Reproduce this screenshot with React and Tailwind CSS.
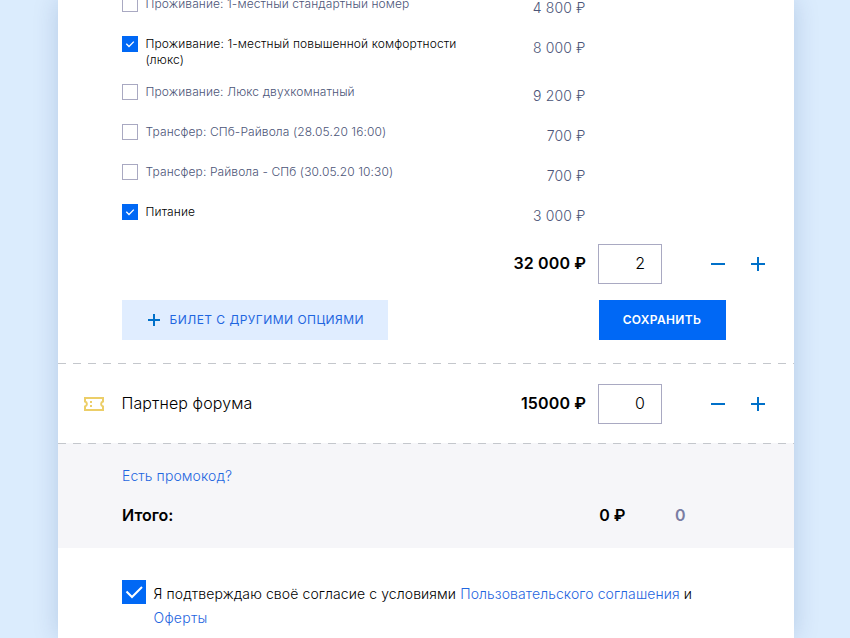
import React from 'react';

const options = [
  { title: 'Проживание: 1-местный стандартный номер', price: '4 800 ₽', checked: false },
  { title: 'Проживание: 1-местный повышенной комфортности (люкс)', price: '8 000 ₽', checked: true },
  { title: 'Проживание: Люкс двухкомнатный', price: '9 200 ₽', checked: false },
  { title: 'Трансфер: СПб-Райвола (28.05.20 16:00)', price: '700 ₽', checked: false },
  { title: 'Трансфер: Райвола - СПб (30.05.20 10:30)', price: '700 ₽', checked: false },
  { title: 'Питание', price: '3 000 ₽', checked: true },
];

const Plus = ({ size = 24, d = 'M12 5v14M5 12h14' }) => (
  <svg width={size} height={size} viewBox={`0 0 ${size} ${size}`} fill="none" stroke="#0070c9" strokeWidth="2">
    <path d={d} />
  </svg>
);

const SmallCheckbox = ({ checked }) =>
  checked ? (
    <span className="flex h-4 w-4 shrink-0 bg-[#0068f5]">
      <svg width="16" height="16" viewBox="0 0 16 16" fill="none" stroke="#fff" strokeWidth="1.3">
        <path d="M4.3 7.7l2.7 2.8 4.8-4.9" />
      </svg>
    </span>
  ) : (
    <span className="h-4 w-4 shrink-0 border border-[#a9a9c2] bg-white" />
  );

const OptionRow = ({ option }) => (
  <label className="mb-4 flex w-[463.5px] items-start">
    <SmallCheckbox checked={option.checked} />
    <span
      className={`ml-[7.5px] w-[336px] text-[12px] leading-4 ${
        option.checked ? 'tracking-[0.13px] text-black' : 'tracking-[0.1px] text-[#4c5578]'
      }`}
    >
      {option.title}
    </span>
    <span className="ml-auto text-[14px] leading-6 tracking-[0.12px] text-[#4c5578]">{option.price}</span>
  </label>
);

const Counter = ({ price, value }) => (
  <>
    <span className="ml-auto w-[120px] pb-0.5 text-right text-[16px] leading-6 font-semibold tracking-[0.12px]">
      {price}
    </span>
    <input
      className="ml-3 h-10 w-16 border border-[#a9a9c2] bg-white pr-4 pb-0.5 text-right text-[16px] font-light text-black"
      defaultValue={value}
    />
    <button className="ml-11">
      <Plus d="M5 12h14" />
    </button>
    <button className="ml-4 mr-6">
      <Plus />
    </button>
  </>
);

const DashedLine = ({ className = '' }) => (
  <div
    className={`h-px shrink-0 bg-[repeating-linear-gradient(90deg,#c4c7cc_0px,#c4c7cc_8px,transparent_8px,transparent_15px)] ${className}`}
  />
);

const TicketIcon = () => (
  <svg width="24" height="24" viewBox="0 0 24 24" fill="none" stroke="#ecce68" strokeWidth="2">
    <path d="M3 6h18v3.500a2.600 2.600 0 0 0 0 5V18H3v-3.500a2.600 2.600 0 0 0 0-5z" />
    <path d="M9 9v2M9 13v2" />
  </svg>
);

export default function App() {
  return (
    <div className="flex h-[638px] justify-start overflow-hidden bg-[#dbecfd] pl-[58px] font-['Inter',sans-serif] font-light text-black">
      <main className="flex h-[638px] w-[736px] flex-col bg-white shadow-[0_0_24px_rgba(0,50,120,0.18)]">
        <section className="-mt-1 shrink-0">
          <div className="pl-16">
            {options.map((option) => (
              <OptionRow key={option.title} option={option} />
            ))}
          </div>
          <div className="flex h-10 items-center">
            <Counter price="32 000 ₽" value="2" />
          </div>
          <div className="mt-4 mb-[23px] flex h-10 pl-16">
            <button className="flex w-[266px] items-center bg-[#e0edff] pl-6 text-[12px] font-normal tracking-[0.46px] text-[#1f66e0]">
              <Plus size={16} d="M8 2v12M2 8h12" />
              <span className="ml-[7.5px]">БИЛЕТ С ДРУГИМИ ОПЦИЯМИ</span>
            </button>
            <button className="ml-[211px] w-[127px] bg-[#0068f5] pr-px text-[12px] font-semibold tracking-[0.35px] text-white">
              СОХРАНИТЬ
            </button>
          </div>
        </section>

        <DashedLine />
        <section className="flex h-[79px] shrink-0 items-center pl-6">
          <TicketIcon />
          <h3 className="ml-[15.5px] pb-px text-[16px] tracking-[0.1px]">Партнер форума</h3>
          <Counter price="15000 ₽" value="0" />
        </section>
        <DashedLine className="bg-[#f6f6f9]" />

        <section className="h-[104px] shrink-0 bg-[#f6f6f9] pt-5 pl-16">
          <a className="block text-[14px] leading-6 tracking-[0.1px] text-[#1f66e0]">Есть промокод?</a>
          <div className="mt-[15px] flex text-[16px] leading-6 font-semibold">
            <span className="w-[384px]">Итого:</span>
            <span className="w-[119.500px] text-right">0 ₽</span>
            <span className="w-[60px] text-right text-[#7a7da3]">0</span>
          </div>
        </section>

        <label className="flex pt-8 pl-16">
          <span className="flex h-6 w-6 shrink-0 bg-[#0068f5]">
            <svg width="24" height="24" viewBox="0 0 24 24" fill="none" stroke="#fff" strokeWidth="2">
              <path d="M4.500 11.500l5.500 5.500L20 7" />
            </svg>
          </span>
          <span className="mt-0.5 ml-[7.5px] w-[556px] text-[14px] leading-6 tracking-[0.1px]">
            Я подтверждаю своё согласие с условиями{' '}
            <a className="text-[#1f66e0]">Пользовательского соглашения</a> и{' '}
            <a className="tracking-[0.28px] text-[#1f66e0]">Оферты</a>
          </span>
        </label>
      </main>
    </div>
  );
}
